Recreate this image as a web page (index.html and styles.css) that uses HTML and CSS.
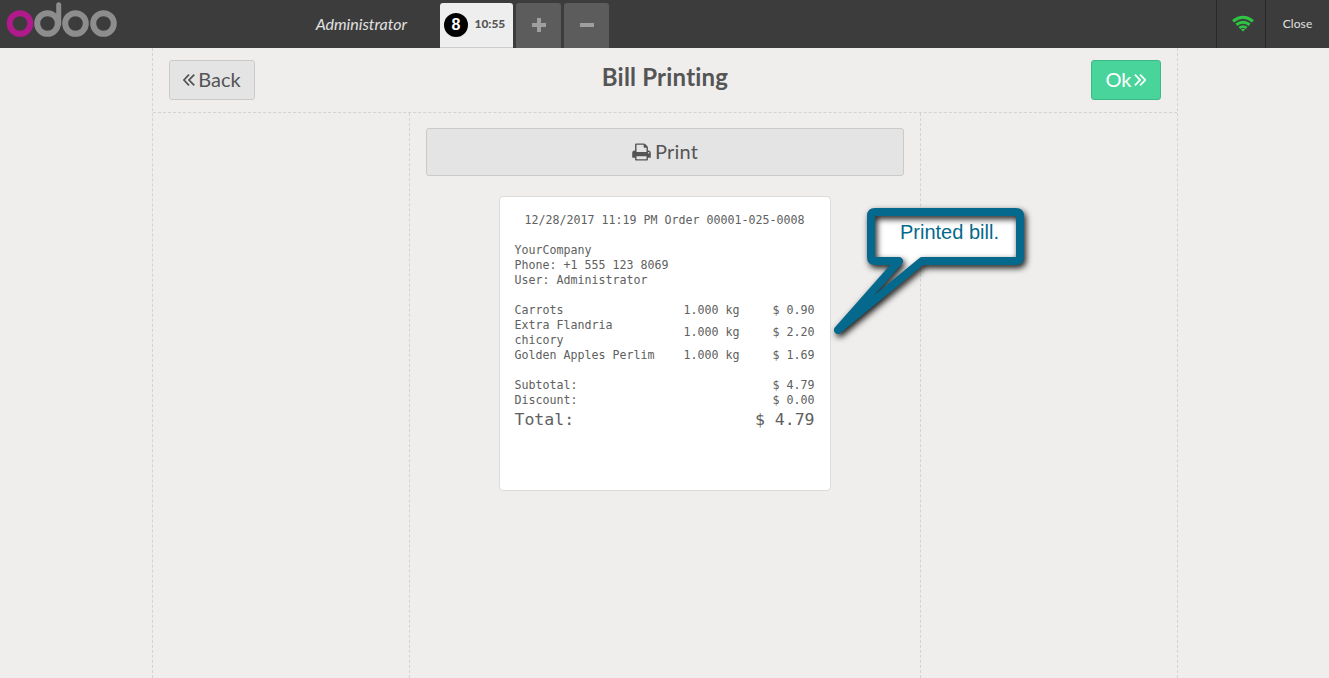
FILE: index.html
```html
<!DOCTYPE html>
<html lang="en">
<head>
<meta charset="utf-8">
<title>Bill Printing</title>
<link rel="stylesheet" href="styles.css">
</head>
<body>
<header class="topbar">
  <svg class="logo" width="112" height="40" viewBox="0 0 112 40" fill="none" stroke="#8d8d8d" stroke-width="6">
    <circle cx="14" cy="23.5" r="10.3" stroke="#b01a8b"/>
    <circle cx="41.5" cy="23.5" r="10.3"/>
    <circle cx="69.5" cy="23.5" r="10.3"/>
    <circle cx="97.5" cy="23.5" r="10.3"/>
    <path d="M52.700 4.800V24" stroke-width="5" stroke-linecap="round"/>
  </svg>
  <div class="username">Administrator</div>
  <nav class="orders">
    <div class="order"><span class="sequence">8</span><span class="time">10:55</span></div>
    <div class="order-btn"><svg width="16" height="16" viewBox="0 0 16 16"><path d="M8 1v14M1 8h14" stroke="#9f9f9f" stroke-width="4"/></svg></div>
    <div class="order-btn"><svg width="16" height="16" viewBox="0 0 16 16"><path d="M1 8h14" stroke="#9f9f9f" stroke-width="4"/></svg></div>
  </nav>
  <div class="status">
    <svg width="22" height="18" viewBox="0 0 22 18" fill="none" stroke="#2fc443" stroke-width="3">
      <path d="M1 6.200Q11 -1.600 21 6.200"/>
      <path d="M4.300 9.700Q11 4.700 17.700 9.700"/>
      <path d="M7.300 12.900Q11 10.300 14.700 12.900" stroke-width="2.700"/>
      <path d="M8.800 14.400Q11 12.900 13.200 14.400L11 16.600Z" fill="#2fc443" stroke="none"/>
    </svg>
  </div>
  <div class="close">Close</div>
</header>
<main class="screen">
  <div class="heading">
    <div class="button back"><svg width="12" height="14" viewBox="0 0 12 14"><path d="M6 1.700L.9 7l5.100 5.300M11.200 1.700L6.100 7l5.100 5.300"/></svg><span>Back</span></div>
    <h1>Bill Printing</h1>
    <div class="button next"><span>Ok</span><svg width="12" height="14" viewBox="0 0 12 14"><path d="M.9 1.700L6 7L.9 12.300M6.100 1.700L11.200 7l-5.100 5.300"/></svg></div>
  </div>
  <div class="columns">
    <div class="center">
      <div class="print">
        <svg width="19" height="20" viewBox="0 0 1664 1792"><path d="M384 1536h896v-256h-896v256zM384 896h896v-384h-160q-40 0-68-28t-28-68v-160h-640v640zM1536 960q0-26-19-45t-45-19-45 19-19 45 19 45 45 19 45-19 19-45zM1664 960v416q0 13-9.500 22.500t-22.500 9.500h-224v160q0 40-28 68t-68 28h-960q-40 0-68-28t-28-68v-160h-224q-13 0-22.500-9.500t-9.500-22.500v-416q0-79 56.500-135.500t135.500-56.500h64v-544q0-40 28-68t68-28h672q40 0 88 20t76 48l152 152q28 28 48 76t20 88v256h64q79 0 135.500 56.500t56.500 135.500z" fill="#555" fill-rule="evenodd"/></svg>
        <span>Print</span>
      </div>
      <section class="receipt">
        <p class="order-ref">12/28/2017 11:19 PM Order 00001-025-0008</p>
        <p>YourCompany<br>Phone: +1 555 123 8069<br>User: Administrator</p>
        <div class="lines">
          <div class="line"><span>Carrots</span><span>1.000 kg</span><span>$ 0.90</span></div>
          <div class="line"><span>Extra Flandria chicory</span><span>1.000 kg</span><span>$ 2.20</span></div>
          <div class="line"><span>Golden Apples Perlim</span><span>1.000 kg</span><span>$ 1.69</span></div>
        </div>
        <div class="sum"><span>Subtotal:</span><span>$ 4.79</span></div>
        <div class="sum"><span>Discount:</span><span>$ 0.00</span></div>
        <div class="sum total"><span>Total:</span><span>$ 4.79</span></div>
      </section>
    </div>
  </div>
</main>
<aside class="callout">
  <svg width="210" height="145" viewBox="830 203 210 145">
    <path d="M871 212H1020V261H922L838 330L899 261H871Z" fill="#fff"/>
    <path class="bubble" d="M875 212H1016Q1020 212 1020 216V257Q1020 261 1016 261H922L838 330L899 261H875Q871 261 871 257V216Q871 212 875 212Z"/>
  </svg>
  <span class="note">Printed bill.</span>
</aside>
</body>
</html>
```
FILE: styles.css
```css
* { box-sizing: border-box; }
body {
  margin: 0;
  height: 678px;
  overflow: hidden;
  display: flex;
  flex-direction: column;
  background: #efeeec;
  color: #555;
  font-family: Lato, sans-serif;
  font-variant-ligatures: none;
}
svg { display: block; flex: none; }

.topbar { display: flex; height: 48px; flex: none; background: #3c3c3c; color: #e1e1e1; }
.logo { margin-left: 6px; }
.username {
  width: 322px;
  padding-right: 33px;
  text-align: right;
  font-size: 16px;
  font-style: italic;
  line-height: 47px;
}
.orders { display: flex; gap: 3px; padding-top: 3px; }
.order {
  display: flex;
  align-items: center;
  width: 73px;
  height: 45px;
  padding: 0 0 1px 4px;
  background: #eee;
  border-bottom: 1px solid #ccc;
  border-radius: 3px 3px 0 0;
  color: #555;
}
.sequence {
  width: 24px;
  height: 24px;
  margin-right: 6.5px;
  border-radius: 50%;
  background: #000;
  color: #fff;
  font: 700 16px/24px "Liberation Sans", sans-serif;
  text-align: center;
}
.time { font-size: 11.9px; font-weight: 900; padding-bottom: 2px; }
.order-btn {
  display: flex;
  align-items: center;
  justify-content: center;
  width: 45px;
  height: 45px;
  padding-bottom: 2px;
  background: #5c5c5c;
  border-radius: 3px 3px 0 0;
}
.status {
  display: flex;
  justify-content: center;
  width: 49px;
  margin-left: auto;
  padding: 15px 0 0 3px;
  border-left: 1px solid #292929;
}
.close {
  width: 64px;
  border-left: 1px solid #292929;
  font-size: 12px;
  letter-spacing: .1px;
  line-height: 48px;
  text-align: center;
}

.screen {
  display: flex;
  flex-direction: column;
  flex: 1;
  width: 1026px;
  margin-left: 152px;
  border: dashed #d3d3d3;
  border-width: 0 1px;
}
.heading {
  display: flex;
  justify-content: space-between;
  height: 65px;
  padding: 12px 16px 0;
  border-bottom: 1px dashed #d3d3d3;
}
.heading h1 {
  margin: 0;
  font-size: 24px;
  letter-spacing: .2px;
  line-height: 34px;
  transform: translateX(-8px);
}
.button {
  display: flex;
  align-items: center;
  justify-content: center;
  gap: 3px;
  height: 40px;
  border: 1px solid #cacaca;
  border-radius: 3px;
  background: #e4e4e4;
  font-size: 20px;
  line-height: 36px;
}
.button span, .print span { padding-bottom: 2px; }
.button svg { fill: none; stroke: #555; stroke-width: 1.8; }
.back { width: 86px; }
.next { width: 70px; background: #48d49b; border-color: #3cba86; color: #fff; }
.next svg { stroke: #fff; }

.columns { display: flex; flex: 1; justify-content: center; }
.center {
  width: 512px;
  padding: 15px 16px;
  border: dashed #d3d3d3;
  border-width: 0 1px;
}
.print {
  display: flex;
  align-items: center;
  justify-content: center;
  gap: 4px;
  height: 48px;
  border: 1px solid #cacaca;
  border-radius: 3px;
  background: #e4e4e4;
  font-size: 20px;
  letter-spacing: .2px;
}
.receipt {
  width: 332px;
  height: 295px;
  margin: 20px auto 0;
  padding: 16px 15.5px 0 14.5px;
  border: 1px solid #dcdcdc;
  border-radius: 4px;
  background: #fff;
  color: #606060;
  font: 11.63px/15px "DejaVu Sans Mono", monospace;
}
.receipt p { margin: 0 0 15px; }
.receipt .order-ref { text-align: center; }
.lines { margin-bottom: 15px; }
.line { display: grid; grid-template-columns: 150px 75px 75px; align-items: center; }
.line span:nth-child(n+2) { text-align: right; }
.line:nth-child(2) span:nth-child(n+2) { padding-bottom: 1px; }
.sum { display: flex; justify-content: space-between; }
.total { font-size: 16.5px; line-height: 24px; }

.callout { position: absolute; left: 830px; top: 203px; }
.bubble {
  fill: none;
  stroke: #04698c;
  stroke-width: 8;
  stroke-linejoin: round;
  filter: drop-shadow(2.5px 3px 3px rgba(0, 0, 0, .9));
}
.note {
  position: absolute;
  left: 70px;
  top: 17px;
  color: #04698c;
  font: 20px/24px "Liberation Sans", sans-serif;
  white-space: nowrap;
}
```
